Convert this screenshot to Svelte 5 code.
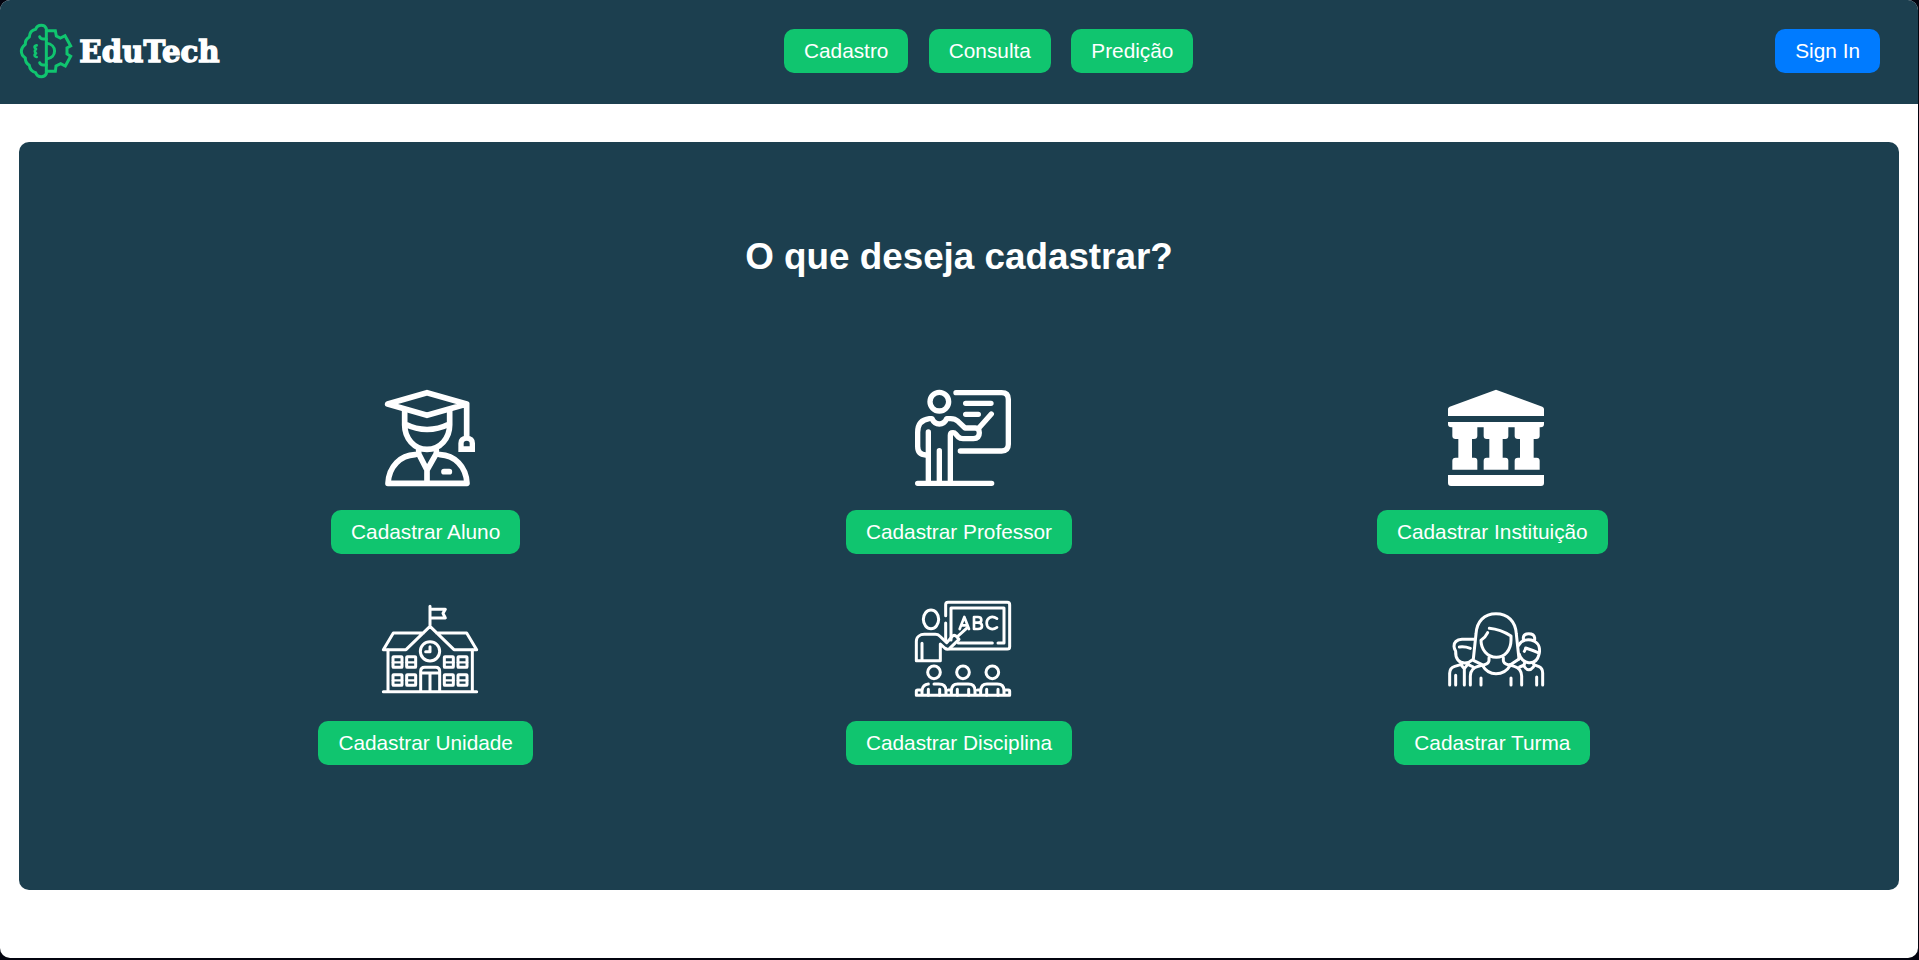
<script>
  const nav = ['Cadastro', 'Consulta', 'Predição'];
  const cards = [
    { id: 'student', label: 'Cadastrar Aluno', box: '36 30 288 288' },
    { id: 'teacher', label: 'Cadastrar Professor', box: '30 30 288 288' },
    { id: 'bank', label: 'Cadastrar Instituição', box: '33 30 288 288' },
    { id: 'school', label: 'Cadastrar Unidade', box: '36 30 288 288' },
    { id: 'lesson', label: 'Cadastrar Disciplina', box: '30 30 288 288' },
    { id: 'group', label: 'Cadastrar Turma', box: '33 30 288 288' }
  ];
</script>

<div class="window">
  <header>
    <svg class="brand" viewBox="0 0 720 312">
      <g fill="none" stroke="#10c56f" stroke-width="9" stroke-linejoin="round" stroke-linecap="round">
        <path d="M139 86Q135 76 124 76Q111 76 107 88Q89 92 88 111Q75 119 76 133Q64 142 64 153Q64 166 76 174Q75 187 88 196Q90 213 107 218Q111 230 124 230Q135 230 139 221Z" />
        <path stroke-linejoin="miter" d="M139 92H166L169 108L181 114L195 107L212 138L201 144V162L212 169L196 198L182 191L168 198L166 214H139" />
        <path d="M139 130C172 133 172 173 139 177M119 110Q121 117 130 117H139M119 188Q121 195 130 195H139" />
        <path stroke-width="8" d="M110 136Q102 137 104 143L108 147Q101 154 108 160L104 164Q103 170 110 171" />
      </g>
      <text x="238" y="187" textLength="421" lengthAdjust="spacingAndGlyphs">EduTech</text>
    </svg>
    <nav>
      {#each nav as item}
        <button>{item}</button>
      {/each}
    </nav>
    <button class="signin">Sign In</button>
  </header>

  <main>
    <h1>O que deseja cadastrar?</h1>
    <div class="grid">
      {#each cards as card}
        <div class="card">
          <svg class="icon" viewBox={card.box}>
            {#if card.id === 'student'}
              <g class="line" stroke-width="17">
                <path d="M53 72L171 38L290 72L171 106ZM290 72V172" />
                <path d="M104 90V135C104 174 132 208 171 208C211 208 239 174 239 135V90M105 132Q171 165 238 132" />
                <path d="M146 211V221L171 270L199 221V211M171 270V308M135 224C92 226 57 258 54 310H291C288 258 253 226 210 224" />
                <path d="M222 275H238" />
              </g>
              <path fill="#fff" fill-rule="evenodd" d="M265 216V190Q265 167 290 167Q315 167 315 190V216ZM281 199H299V190Q299 182 290 182Q281 182 281 190Z" />
            {:else if card.id === 'teacher'}
              <g class="line" stroke-width="16">
                <circle cx="103" cy="65" r="28" />
                <path d="M153 38H290Q310 38 310 58V193Q310 213 290 213H166M182 70H258M182 103H220" />
                <path d="M38 310H260M70 156V302M103 212V302M136 302V166Q136 158 144 158Q149 158 152 162L160 171Q165 176 174 176H205Q223 175 223 158Q223 144 211 144H180L159 124Q150 116 137 116H125Q118 132 103 132Q88 132 81 116H73C49 119 38 133 38 157V199Q38 224 62 225M219 147L259 102" />
              </g>
            {:else if card.id === 'bank'}
              <path fill="#fff" d="M33 108V87Q33 82 38 80L177 29L316 80Q321 82 321 87V108ZM33 126H321V133Q321 142 311 142H308V168Q308 177 297 177H290V233H299Q308 233 308 242V269H233V242Q233 233 243 233H249V177H243Q233 177 233 168V142H214V168Q214 177 205 177H197V233H205Q214 233 214 242V269H140V242Q140 233 149 233H157V177H149Q140 177 140 168V142H121V168Q121 177 111 177H105V233H112Q121 233 121 242V269H46V242Q46 233 56 233H64V177H56Q46 177 46 168V142H43Q33 142 33 133ZM33 285H321V309Q321 318 312 318H42Q33 318 33 309Z" />
            {:else if card.id === 'school'}
              <g class="line" stroke-width="9">
                <path d="M180 49V108M180 58H226L219 70L226 84H180M160 129H70L40 179H108L180 109L252 179H320L290 129H200" />
                <path d="M54 180V304M307 180V304M40 305H320" />
                <circle cx="180" cy="184" r="29" />
                <path d="M180 170V185H167" />
                <path d="M152 304V244Q152 232 164 232H197Q209 232 209 244V304M153 249H208M180 249V304" />
                {#each [69, 110, 223, 264] as x}
                  {#each [200, 254] as y}
                    <rect {x} {y} width="27" height="32" rx="2" />
                    <path stroke-width="7" d="M{x} {y + 17}h27" />
                  {/each}
                {/each}
              </g>
            {:else if card.id === 'lesson'}
              <g class="line" stroke-width="9">
                <path d="M122 77V44Q122 37 129 37H307Q314 37 314 44V170Q314 177 307 177H134M122 99V150M138 150V54H297V159H279M262 159H160" />
                <ellipse cx="78" cy="88" rx="23" ry="28" />
                <path d="M34 212V154C34 140 46 133 58 133H91Q99 133 104 138L125 158L142 139Q146 134 153 138L162 148L134 175Q127 181 119 174L106 162V212ZM51 160V212M156 141L188 112" />
                <path stroke-width="8" d="M164 117L178 81L192 117M170 106H186M207 81V117M207 81H219Q229 81 229 90Q229 98 219 98H207M219 98Q231 98 231 108Q231 117 219 117H207M276 86C260 74 245 84 245 99C245 115 261 123 276 112" />
                <path d="M51 300H38Q34 300 34 304V316H314V304Q314 300 310 300H298M130 300H139M218 300H227M51 316V302Q53 283 70 282M87 282H101Q123 282 123 302V316M139 316V302Q140 282 158 282H190Q210 282 210 302V316M227 316V302Q228 282 246 282H277Q297 282 297 302V316" />
                <path d="M70 298V316M104 298V316M157 298V316M191 298V316M245 298V316M279 298V316" />
                <circle cx="87" cy="247" r="19" />
                <circle cx="174" cy="247" r="19" />
                <circle cx="262" cy="247" r="19" />
              </g>
            {:else}
              <g class="line" stroke-width="9">
                <path d="M109 207L117 132C119 94 142 71 177 71C212 71 236 94 238 132L246 207" />
                <path d="M157 115Q190 118 222 138V151C222 180 203 202 178 202C151 202 132 179 132 151Q145 143 152 128" />
                <path d="M156 203V211Q156 221 142 224L124 229Q101 234 100 258V285M199 203V211Q199 221 213 224L232 229Q253 235 254 258V285M137 227Q151 251 177 251Q205 251 219 227M132 264V285M222 264V285M109 211L140 226M246 207L218 226" />
                <path d="M112 148H75Q51 150 51 169Q51 175 56 184C55 207 66 219 83 219Q96 219 105 210M67 171Q84 169 100 175M72 218V224L82 236L94 221M71 224L53 229Q38 234 38 250V285M56 256V285M82 237V285M94 224L109 231" />
                <path d="M245 166C254 149 274 146 291 153C307 161 310 178 306 193C301 215 286 219 275 218C260 216 249 204 247 193M259 151V143Q260 131 275 131Q291 131 293 143V151M262 184Q265 180 266 174Q285 180 303 188M262 218V225L248 231M290 216V224L306 230Q317 235 317 249V285M263 231Q275 248 289 231M299 261V285" />
              </g>
            {/if}
          </svg>
          <button>{card.label}</button>
        </div>
      {/each}
    </div>
  </main>
</div>

<style>
  :global(body) {
    background: #03040f;
  }
  .window {
    box-sizing: border-box;
    width: 1918px;
    height: 958px;
    border-radius: 10px;
    overflow: hidden;
    background: #fff;
    font-family: 'Liberation Sans', Arial, sans-serif;
  }
  header {
    display: grid;
    grid-template-columns: 784px 1fr auto;
    align-items: start;
    height: 104px;
    padding-right: 38px;
    background: #1c3f4f;
  }
  .brand {
    display: block;
    width: 240px;
    height: 104px;
  }
  .brand text {
    font: bold 88px 'DejaVu Serif', serif;
    fill: #fff;
    stroke: #fff;
    stroke-width: 4px;
  }
  nav {
    display: flex;
    gap: 20.4px;
    padding-top: 29px;
  }
  button {
    height: 44px;
    padding: 0 20px;
    border: 0;
    border-radius: 10px;
    background: #10c56f;
    color: #fff;
    font: 20.8px 'Liberation Sans', Arial, sans-serif;
    white-space: nowrap;
  }
  .signin {
    margin-top: 29px;
    background: #007bff;
  }
  main {
    box-sizing: border-box;
    height: 748px;
    margin: 38px 19px 0;
    padding-top: 93px;
    border-radius: 10px;
    background: #1c3f4f;
  }
  h1 {
    margin: 0;
    color: #fff;
    font-size: 36.8px;
    line-height: 44px;
    text-align: center;
  }
  .grid {
    display: grid;
    grid-template-columns: repeat(3, 1fr);
    row-gap: 46px;
    width: 1600px;
    margin: 111px auto 0;
  }
  .card {
    display: flex;
    flex-direction: column;
    align-items: center;
    gap: 24px;
  }
  .card:nth-child(n + 4) {
    gap: 25px;
  }
  .icon {
    width: 96px;
    height: 96px;
    margin-left: 8px;
    overflow: visible;
  }
  .line {
    fill: none;
    stroke: #fff;
    stroke-linecap: round;
    stroke-linejoin: round;
  }
</style>
